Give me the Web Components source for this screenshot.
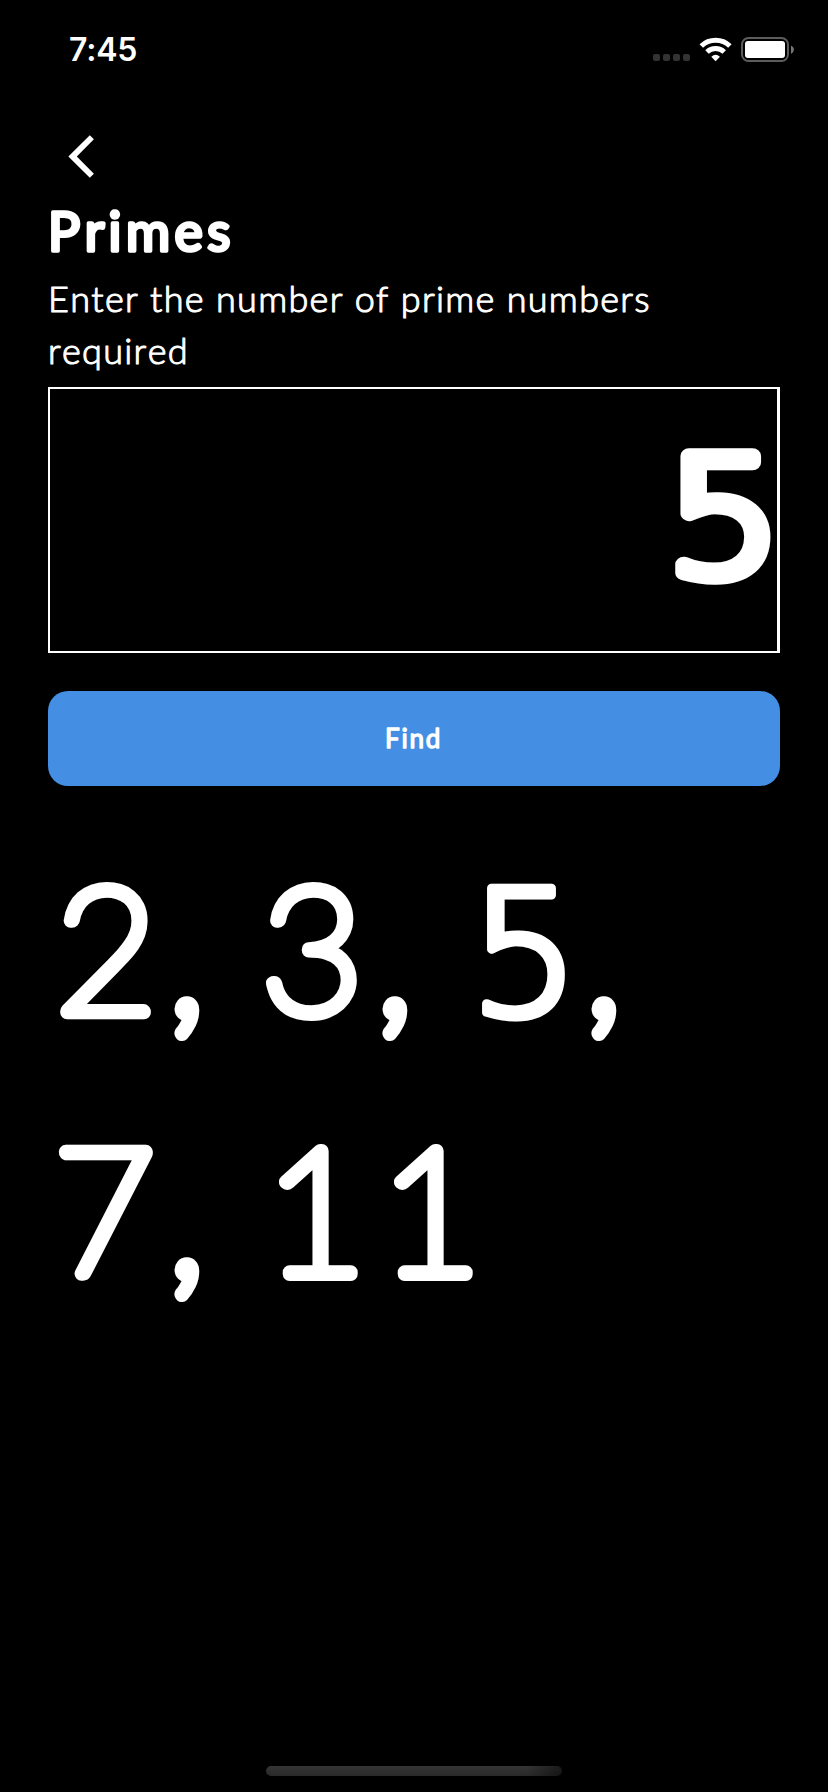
<!DOCTYPE html>
<html lang="en">
<head>
<meta charset="utf-8">
<title>Primes</title>
<style>
  html, body { margin: 0; background: #000; }
  body { width: 828px; height: 1792px; overflow: hidden; color: #fff; font-family: Lato, "Noto Sans", sans-serif; }
</style>
</head>
<body>
<primes-app></primes-app>
<script>
const define = (name, html, setup) => {
  const template = document.createElement('template');
  template.innerHTML = html;
  customElements.define(name, class extends HTMLElement {
    connectedCallback() {
      if (this.shadowRoot) return;
      this.attachShadow({ mode: 'open' }).append(template.content.cloneNode(true));
      if (setup) setup(this, this.shadowRoot);
    }
  });
};

// One line of type whose glyph outlines get round joins.
// Fives are set in a face that gives them an upright stem.
define('round-text', `
  <style>
    :host { display: block; height: var(--line); }
    svg { display: block; width: 100%; height: 100%; overflow: visible; }
    text { fill: currentColor; stroke: currentColor; stroke-linejoin: round; stroke-linecap: round;
           stroke-width: var(--round, 0); white-space: pre; font-kerning: none; }
    .five { font-family: "DejaVu Sans", sans-serif; font-size: var(--five-size); stroke-width: var(--five-round); }
  </style>
  <svg><text></text></svg>`, (host, root) => {
  const text = root.querySelector('text');
  for (const part of host.getAttribute('text').split(/(5)/).filter(Boolean)) {
    const span = document.createElementNS('http://www.w3.org/2000/svg', 'tspan');
    if (part === '5') span.setAttribute('class', 'five');
    span.textContent = part;
    text.append(span);
  }
  text.setAttribute('y', host.getAttribute('baseline'));
  text.setAttribute('x', host.getAttribute('start') || 0);
  if (host.hasAttribute('length')) {
    text.setAttribute('textLength', host.getAttribute('length'));
    text.setAttribute('lengthAdjust', 'spacingAndGlyphs');
  }
});

define('status-bar', `
  <style>
    :host { display: flex; justify-content: space-between; align-items: flex-start; height: 124px;
            box-sizing: border-box; padding: 30px 34px 0 69px; }
    time { font: 600 32px/40px Inter, sans-serif; letter-spacing: -.2px; }
    svg { display: block; width: 144px; height: 40px; }
  </style>
  <time>7:45</time>
  <svg viewBox="650 30 144 40">
    <g fill="#333">
      <rect x="653" y="54" width="7" height="7" rx="2"/><rect x="663" y="54" width="7" height="7" rx="2"/>
      <rect x="673" y="54" width="7" height="7" rx="2"/><rect x="683" y="54" width="7" height="7" rx="2"/>
    </g>
    <g fill="none" stroke="#fff" stroke-width="5">
      <path d="M701.3 46A20.6 20.6 0 0 1 729.9 46"/>
      <path d="M707 52A12.4 12.4 0 0 1 724.2 52"/>
    </g>
    <path fill="#fff" d="M711.3 56.7Q715.6 52.7 719.9 56.7L715.6 61.3Z"/>
    <rect x="742" y="38" width="46" height="23" rx="6.5" fill="none" stroke="#5c5c5c" stroke-width="2"/>
    <rect x="745" y="41" width="40" height="17" rx="3" fill="#fff"/>
    <path fill="#777" d="M791 45.5Q794 47 794 49.5T791 54Z"/>
  </svg>`);

define('back-button', `
  <style>
    :host { display: block; height: 76px; padding-left: 20px; }
    svg { display: block; }
  </style>
  <svg width="28" height="64" viewBox="68 124 28 64" role="img" aria-label="Back">
    <path fill="#fff" d="M89.8 135.2L93.9 139.3L76.8 156.5L93.9 173.7L89.8 177.8L68.4 156.5Z"/>
  </svg>`);

define('number-field', `
  <style>
    :host { display: flex; justify-content: flex-end; box-sizing: border-box; height: 266px;
            border: 2px solid #fff; border-right-width: 3px; }
    round-text { --line: 262px; --five-size: 162px; --five-round: 15.5px; width: 110px; font-size: 162px; font-weight: 200; }
  </style>
  <round-text text="5" baseline="185.5" start="-1" length="116"></round-text>`);

define('action-button', `
  <style>
    :host { display: flex; justify-content: center; box-sizing: border-box; height: 95px; margin-top: 38px;
            border-radius: 20px; background: #448ee4; }
    round-text { --line: 95px; --round: 1.3px; width: 60px; font-size: 26px; font-weight: 400; letter-spacing: 1.8px; }
  </style>
  <round-text text="Find" baseline="56.5" start="1"></round-text>`);

define('prime-list', `
  <style>
    :host { display: block; margin-top: 38px; }
    round-text { --line: 261px; --round: 14px; --five-size: 173px; --five-round: 9px; font-size: 175px; font-weight: 100; }
  </style>
  <round-text text="2, 3, 5," baseline="188.5 188.5 188.5 188.5 188.5 188.5 190.5 188.5" start="7.5 120 165 213.5 328 373 421.5 537"></round-text>
  <round-text text="7, 11" baseline="188.5" start="5.5 120 165 217 332"></round-text>`);

define('home-indicator', `
  <style>
    :host { display: block; width: 296px; height: 10px; margin: auto auto 16px; border-radius: 5px;
            background: linear-gradient(90deg, transparent 88%, rgba(0,0,0,.5)), linear-gradient(#353535, #292929); }
  </style>`);

define('primes-app', `
  <style>
    :host { display: flex; flex-direction: column; height: 1792px; background: #000; }
    main { display: block; padding: 0 48px; }
    .title { --line: 72px; --round: 3.6px; font-size: 53.5px; font-weight: 400; letter-spacing: 4.5px; }
    .hint { --line: 52px; --round: 1.1px; font-size: 36px; font-weight: 300; letter-spacing: 1.3px; }
    .hint.last { --line: 63px; }
  </style>
  <status-bar></status-bar>
  <main>
    <back-button></back-button>
    <round-text class="title" text="Primes" baseline="51" start="0"></round-text>
    <round-text class="hint" text="Enter the number of prime numbers" baseline="39.5" start="0"></round-text>
    <round-text class="hint last" text="required" baseline="39.5" start="0"></round-text>
    <number-field></number-field>
    <action-button></action-button>
    <prime-list></prime-list>
  </main>
  <home-indicator></home-indicator>`);
</script>
</body>
</html>
